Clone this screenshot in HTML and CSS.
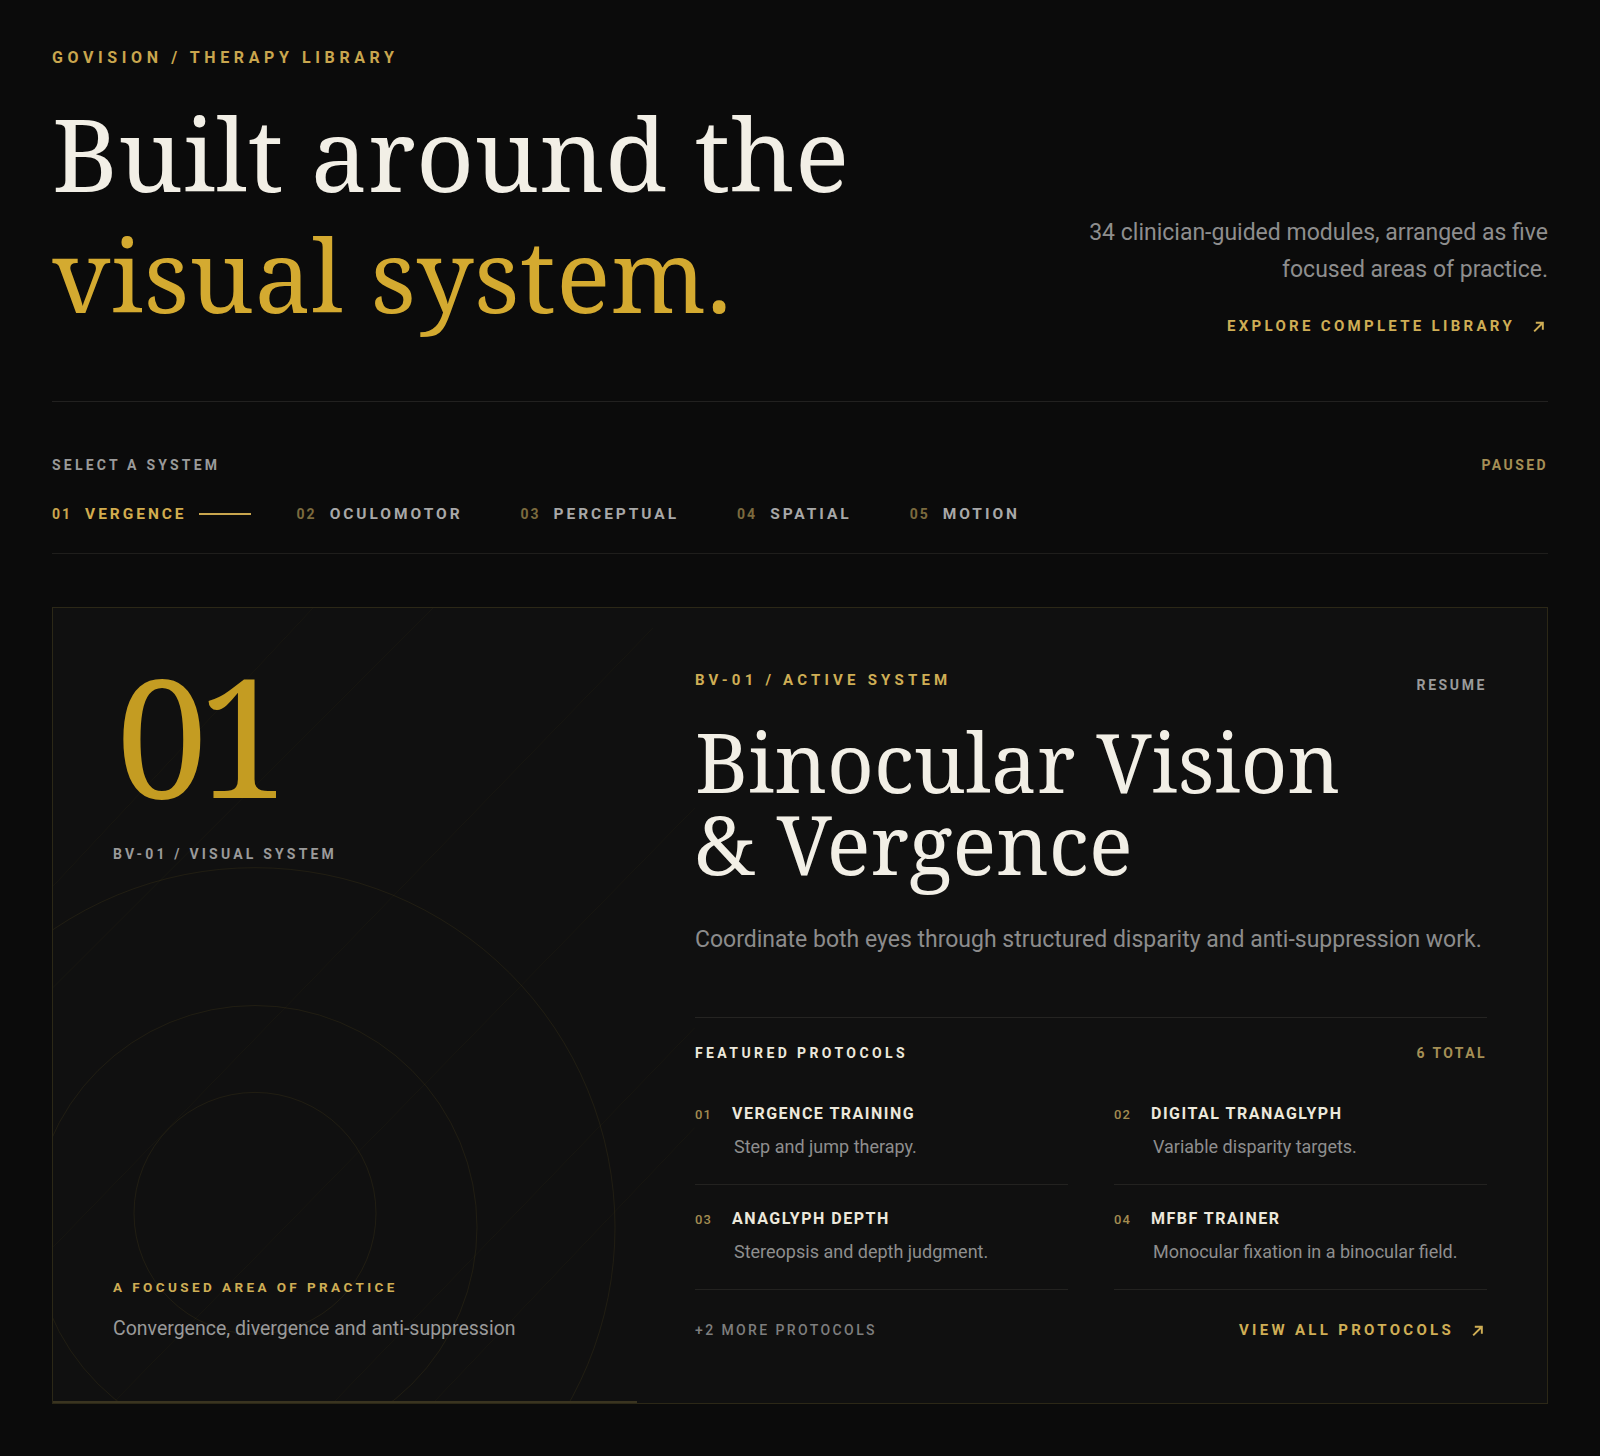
FILE: index.html
```html
<!DOCTYPE html>
<html lang="en">
<head>
<meta charset="utf-8">
<title>GoVision / Therapy Library</title>
<link rel="stylesheet" href="styles.css">
</head>
<body>
<main class="page">
  <header class="hero">
    <div class="hero-left">
      <div class="eyebrow">GOVISION / THERAPY LIBRARY</div>
      <h1 class="hero-title">Built around the<br><span class="gold">visual system.</span></h1>
    </div>
    <div class="hero-right">
      <p class="hero-copy">34 clinician-guided modules, arranged as five<br>focused areas of practice.</p>
      <a class="link-gold" href="#">EXPLORE COMPLETE LIBRARY
        <svg class="arrow" viewBox="0 0 12 12" width="12" height="12"><path d="M2 10.5 L10 2.5 M3.5 2.5 H10 V9" fill="none" stroke="currentColor" stroke-width="1.8"/></svg>
      </a>
    </div>
  </header>

  <section class="systems">
    <div class="systems-head">
      <span class="label-gray">SELECT A SYSTEM</span>
      <span class="label-paused">PAUSED</span>
    </div>
    <nav class="tabs">
      <a class="tab active" href="#"><span class="tab-num">01</span><span class="tab-name">VERGENCE</span><span class="tab-line"></span></a>
      <a class="tab" href="#"><span class="tab-num">02</span><span class="tab-name">OCULOMOTOR</span><span class="tab-line"></span></a>
      <a class="tab" href="#"><span class="tab-num">03</span><span class="tab-name">PERCEPTUAL</span><span class="tab-line"></span></a>
      <a class="tab" href="#"><span class="tab-num">04</span><span class="tab-name">SPATIAL</span><span class="tab-line"></span></a>
      <a class="tab" href="#"><span class="tab-num">05</span><span class="tab-name">MOTION</span><span class="tab-line"></span></a>
    </nav>
  </section>

  <section class="card">
    <div class="card-left">
      <svg class="rings" viewBox="0 0 642 796" preserveAspectRatio="none">
        <g stroke="#d4aa30" stroke-opacity="0.045" stroke-width="1">
          <line x1="-60" y1="440" x2="380" y2="0"/>
          <line x1="0" y1="640" x2="600" y2="20"/>
          <line x1="60" y1="796" x2="642" y2="200"/>
          <line x1="280" y1="796" x2="642" y2="420"/>
          <line x1="-20" y1="300" x2="260" y2="0"/>
          <line x1="380" y1="796" x2="642" y2="520"/>
        </g>
        <g fill="none" stroke="#d4aa30" stroke-opacity="0.09" stroke-width="1">
          <circle cx="202" cy="606" r="121"/>
          <circle cx="202" cy="620" r="222"/>
          <circle cx="202" cy="620" r="360"/>
        </g>
      </svg>
      <div class="big-num">01</div>
      <div class="label-gray sys-code">BV-01 / VISUAL SYSTEM</div>
      <div class="left-foot">
        <div class="label-gold focus-label">A FOCUSED AREA OF PRACTICE</div>
        <p class="left-copy">Convergence, divergence and anti-suppression</p>
      </div>
      <div class="progress"></div>
    </div>

    <div class="card-right">
      <div class="right-head">
        <span class="label-gold active-sys">BV-01 / ACTIVE SYSTEM</span>
        <a class="resume" href="#">RESUME</a>
      </div>
      <h2 class="sys-title">Binocular Vision<br>&amp; Vergence</h2>
      <p class="sys-copy">Coordinate both eyes through structured disparity and anti-suppression work.</p>

      <div class="featured">
        <div class="featured-head">
          <span class="featured-title">FEATURED PROTOCOLS</span>
          <span class="featured-total">6 TOTAL</span>
        </div>
        <div class="protocols">
          <div class="protocol">
            <span class="p-num">01</span>
            <div class="p-body"><div class="p-name">VERGENCE TRAINING</div><div class="p-desc">Step and jump therapy.</div></div>
          </div>
          <div class="protocol">
            <span class="p-num">02</span>
            <div class="p-body"><div class="p-name">DIGITAL TRANAGLYPH</div><div class="p-desc">Variable disparity targets.</div></div>
          </div>
          <div class="protocol">
            <span class="p-num">03</span>
            <div class="p-body"><div class="p-name">ANAGLYPH DEPTH</div><div class="p-desc">Stereopsis and depth judgment.</div></div>
          </div>
          <div class="protocol">
            <span class="p-num">04</span>
            <div class="p-body"><div class="p-name">MFBF TRAINER</div><div class="p-desc">Monocular fixation in a binocular field.</div></div>
          </div>
        </div>
        <div class="featured-foot">
          <span class="more">+2 MORE PROTOCOLS</span>
          <a class="link-gold" href="#">VIEW ALL PROTOCOLS
            <svg class="arrow" viewBox="0 0 12 12" width="12" height="12"><path d="M2 10.5 L10 2.5 M3.5 2.5 H10 V9" fill="none" stroke="currentColor" stroke-width="1.8"/></svg>
          </a>
        </div>
      </div>
    </div>
  </section>
</main>
</body>
</html>
```

FILE: styles.css
```css
* { box-sizing: border-box; }

html, body {
  margin: 0;
  background: #0b0b0b;
}

body {
  font-family: Roboto, "Liberation Sans", Arial, sans-serif;
  color: #f2efe6;
}

a { text-decoration: none; }

.page {
  padding: 49px 52px 52px;
}

/* ---------- hero ---------- */
.hero {
  display: flex;
  justify-content: space-between;
  align-items: flex-end;
  padding-bottom: 66px;
  border-bottom: 1px solid #222120;
}

.eyebrow {
  font-size: 16px;
  font-weight: 700;
  letter-spacing: 4.6px;
  color: #c9a64e;
  line-height: 18px;
}

.hero-title {
  margin: 26px 0 0;
  font-family: "Noto Serif", "DejaVu Serif", "Liberation Serif", serif;
  font-weight: 400;
  font-size: 101px;
  line-height: 121px;
  letter-spacing: 0.5px;
  color: #f2efe6;
}

.gold { color: #d4aa30; }

.hero-right {
  text-align: right;
  padding-bottom: 0;
}

.hero-copy {
  margin: 0 0 28px;
  font-size: 23px;
  line-height: 37px;
  color: #8e8e8e;
}

.link-gold {
  display: inline-flex;
  align-items: center;
  gap: 17px;
  font-size: 15px;
  font-weight: 700;
  letter-spacing: 3.3px;
  color: #cfae55;
}

.arrow {
  display: block;
  width: 13px;
  height: 13px;
  margin-right: 3px;
}

/* ---------- systems / tabs ---------- */
.systems {
  padding: 55px 0 0;
  border-bottom: 1px solid #1f1e1c;
}

.systems-head {
  display: flex;
  justify-content: space-between;
  align-items: center;
}

.label-gray {
  font-size: 14px;
  font-weight: 700;
  letter-spacing: 3.2px;
  color: #9a9a9a;
  line-height: 16px;
}

.label-paused {
  font-size: 14px;
  font-weight: 700;
  letter-spacing: 2.4px;
  color: #a58f55;
  line-height: 16px;
}

.tabs {
  display: flex;
  align-items: center;
  gap: 46px;
  padding: 32px 0 30px;
}

.tab {
  display: inline-flex;
  align-items: center;
  font-weight: 700;
  line-height: 18px;
}

.tab-num {
  font-size: 14px;
  letter-spacing: 2px;
  color: #7b6a3e;
  margin-right: 13px;
}

.tab-name {
  font-size: 15.5px;
  letter-spacing: 2.95px;
  color: #a8a8a8;
}

.tab-line {
  display: block;
  width: 0;
  height: 2px;
  margin-left: 12px;
  background: #c9a64e;
}

.tab.active .tab-num { color: #c9a64e; }
.tab.active .tab-name { color: #d2ad4e; }
.tab.active .tab-line { width: 52px; }

/* ---------- card ---------- */
.card {
  margin-top: 53px;
  display: grid;
  grid-template-columns: 642px 1fr;
  background: #101010;
  border: 1px solid #2c2817;
  min-height: 797px;
}

.card-left {
  position: relative;
  overflow: hidden;
  display: flex;
  flex-direction: column;
  padding: 42px 60px 61px;
}

.rings {
  position: absolute;
  left: 0;
  top: 0;
  width: 100%;
  height: 100%;
  pointer-events: none;
}

.big-num {
  position: relative;
  margin-left: 3px;
  font-family: "Noto Serif", "DejaVu Serif", "Liberation Serif", serif;
  font-size: 164px;
  line-height: 170px;
  letter-spacing: -10px;
  color: #c49c22;
}

.sys-code {
  position: relative;
  margin-top: 26px;
}

.left-foot {
  position: relative;
  margin-top: auto;
}

.label-gold {
  font-size: 14px;
  font-weight: 700;
  letter-spacing: 3.4px;
  color: #cfae55;
  line-height: 16px;
}

.focus-label {
  font-size: 13.5px;
}

.left-copy {
  margin: 21px 0 0;
  font-size: 19.5px;
  line-height: 26px;
  color: #9a9a9a;
}

.progress {
  position: absolute;
  left: 0;
  bottom: 0;
  width: 584px;
  height: 2px;
  background: #3a3420;
}

.card-right {
  padding: 59px 60px 60px 0;
  display: flex;
  flex-direction: column;
}

.right-head {
  display: flex;
  justify-content: space-between;
  align-items: center;
}

.active-sys {
  font-size: 15px;
  letter-spacing: 4.2px;
}

.resume {
  font-size: 14px;
  font-weight: 700;
  letter-spacing: 2.6px;
  color: #9a9a9a;
  margin-top: 10px;
}

.sys-title {
  margin: 28px 0 0;
  font-family: "Noto Serif", "DejaVu Serif", "Liberation Serif", serif;
  font-weight: 400;
  font-size: 81.5px;
  line-height: 82px;
  color: #f2efe6;
}

.sys-copy {
  margin: 40px 0 0;
  font-size: 23px;
  line-height: 30px;
  color: #8c8c8c;
}

.featured {
  margin-top: 62px;
  border-top: 1px solid #252422;
  padding-top: 27px;
}

.featured-head {
  display: flex;
  justify-content: space-between;
  align-items: center;
}

.featured-title {
  font-size: 14px;
  font-weight: 700;
  letter-spacing: 3.4px;
  color: #ece8dc;
}

.featured-total {
  font-size: 14px;
  font-weight: 700;
  letter-spacing: 2.4px;
  color: #a58f55;
}

.protocols {
  margin-top: 43px;
  display: grid;
  grid-template-columns: 1fr 1fr;
  column-gap: 46px;
}

.protocol {
  display: flex;
  align-items: flex-start;
  padding: 0 0 26px;
  border-bottom: 1px solid #232220;
  margin-bottom: 24px;
}

.p-num {
  width: 37px;
  font-size: 13px;
  font-weight: 500;
  letter-spacing: 1px;
  line-height: 20px;
  color: #a38c50;
  padding-top: 1px;
}

.p-name {
  font-size: 16px;
  font-weight: 700;
  letter-spacing: 1.5px;
  line-height: 20px;
  color: #ece8dc;
}

.p-desc {
  margin-top: 12px;
  padding-left: 2px;
  font-size: 18px;
  line-height: 22px;
  color: #8e8e8e;
}

.featured-foot {
  display: flex;
  justify-content: space-between;
  align-items: center;
  margin-top: 7px;
}

.more {
  font-size: 14px;
  font-weight: 500;
  letter-spacing: 2.4px;
  color: #7e7e7e;
}
```
